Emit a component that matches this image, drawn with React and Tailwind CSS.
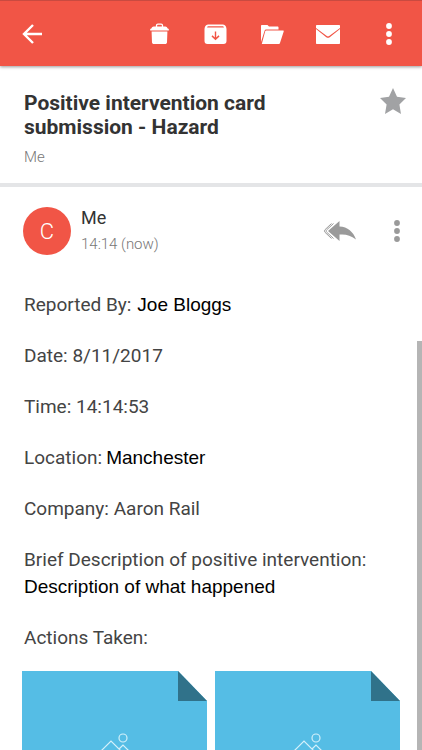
const Toolbar = () => {
  return (
    <header className="flex h-[66px] shrink-0 items-center justify-between border-t border-[#c94a40] bg-[#f15546] pr-[21px] pl-5 text-white shadow-[0_1px_3px_rgba(0,0,0,0.4)]">
      <button type="button" aria-label="Back" className="flex size-6 items-center justify-center">
        <svg viewBox="0 0 24 24" className="size-6" fill="none" stroke="currentColor" strokeWidth="2.4">
          <path d="M22 12H4.5M13 3L4 12l9 9" />
        </svg>
      </button>

      <div className="flex items-center gap-8">
        <button type="button" aria-label="Delete">
          <svg viewBox="0 0 24 24" className="size-6" fill="currentColor">
            <path d="M8.500 5V3.600c0-.8.6-1.400 1.400-1.400h3.200c.8 0 1.400.6 1.400 1.400V5" fill="none" stroke="currentColor" strokeWidth="1.300" />
            <path d="M5.700 4.500h11.600c1 0 1.900.8 2.100 1.800L20.800 7v1.500H2.200V7l1.400-.7c.2-1 1.100-1.800 2.100-1.800zM3.600 9.500h15.800l-.4 11c-.1.900-.8 1.500-1.700 1.500H5.700c-.9 0-1.600-.6-1.700-1.500z" />
          </svg>
        </button>
        <button type="button" aria-label="Archive">
          <svg viewBox="0 0 24 24" className="size-6" fill="currentColor">
            <path fillRule="evenodd" d="M4 2.500h15a3 3 0 0 1 2.600 1.600c.5.900.9 2 .9 3V19a3 3 0 0 1-3 3h-16a3 3 0 0 1-3-3V7c0-1 .4-2.100.9-2.900A3 3 0 0 1 4 2.500zM3 5.500h17l-.8-1.300H3.800zM10.800 9.500v6l-2.300-2.200-1 1.100 4 3.800 4-3.800-1-1.100-2.300 2.200v-6z" />
          </svg>
        </button>
        <button type="button" aria-label="Move to folder">
          <svg viewBox="0 0 24 24" className="size-6" fill="currentColor">
            <path d="M1 20V4c0-.6.4-1 1-1h5.500l1.500 1.500h8.500c.6 0 1 .4 1 1v2H6.500c-1 0-1.700.5-2 1.400z" />
            <path d="M6.200 8.500H23c.6 0 .9.500.7 1l-3.800 11.800c-.1.400-.5.700-1 .7H1.800L5.200 9.300c.1-.5.500-.8 1-.8z" />
          </svg>
        </button>
        <button type="button" aria-label="Mark as unread">
          <svg viewBox="0 0 24 24" className="size-6" fill="currentColor">
            <path d="M1 3h22c.6 0 1 .4 1 1v2L13.200 14c-.7.600-1.700.600-2.400 0L0 6V4c0-.6.4-1 1-1z" />
            <path d="M0 7l10.300 8.200c1 .8 2.400.8 3.400 0L24 7v14c0 .6-.4 1-1 1H1c-.6 0-1-.4-1-1z" />
          </svg>
        </button>
        <button type="button" aria-label="More options" className="ml-[5px]">
          <svg viewBox="0 0 24 24" className="size-6" fill="currentColor">
            <circle cx="12" cy="4" r="2.900" />
            <circle cx="12" cy="12" r="2.900" />
            <circle cx="12" cy="20" r="2.900" />
          </svg>
        </button>
      </div>
    </header>
  );
};

const Subject = () => {
  return (
    <section className="flex items-start justify-between border-b-4 border-[#e4e5e7] pt-[22px] pr-4 pb-4 pl-6">
      <div className="pt-[3px]">
        <h1 className="max-w-[280px] text-[21px] leading-6 font-bold text-[#333333]">
          Positive intervention card submission - Hazard
        </h1>
        <p className="mt-2 text-[15px] leading-5 font-light text-[#777777]">Me</p>
      </div>
      <button type="button" aria-label="Star" className="text-[#a1a2a4]">
        <svg viewBox="0 0 26 26" className="size-[26px]" fill="currentColor">
          <path d="M13 0l4 8.800 9 1.100-6.600 6.500L21 26l-8-4.700L5 26l1.600-9.600L0 9.900l9-1.100z" />
        </svg>
      </button>
    </section>
  );
};

const Sender = () => {
  return (
    <div className="flex items-center pt-[18px] pr-[13px] pl-[23px]">
      <div className="flex size-12 items-center justify-center rounded-full bg-[#f15546] text-[22px] font-light text-white">
        C
      </div>
      <div className="ml-[10px] flex-1">
        <p className="text-[18px] leading-[26px] text-[#333333]">Me</p>
        <p className="text-[15px] leading-[26px] font-light text-[#777777]">14:14 (now)</p>
      </div>
      <button type="button" aria-label="Reply all" className="text-[#9a9a9a]">
        <svg viewBox="0 0 34 24" className="h-6 w-[34px]" fill="currentColor">
          <path d="M5 12L16.500 2v5.500c8 .3 14 5.500 16.500 13-5.500-4.300-10-5.500-16.500-5V22z" />
          <path d="M10.500 4.500L3.500 11c-.6.600-.6 1.400 0 2l7 6.500M8.500 4.500L2 10.700c-.8.700-.8 1.900 0 2.600l6.500 6.200" fill="none" stroke="currentColor" />
        </svg>
      </button>
      <button type="button" aria-label="Message options" className="ml-7 text-[#9a9a9a]">
        <svg viewBox="0 0 24 24" className="size-6" fill="currentColor">
          <circle cx="12" cy="4" r="2.900" />
          <circle cx="12" cy="12" r="2.900" />
          <circle cx="12" cy="20" r="2.900" />
        </svg>
      </button>
    </div>
  );
};

const Value = ({ children }) => {
  return (
    <span className="font-['Liberation_Sans',Arial,sans-serif] text-[19px] text-black">
      {children}
    </span>
  );
};

const Attachment = ({ name }) => {
  return (
    <a href="#attachment" aria-label={name} className="flex-1">
      <svg viewBox="0 0 185 240" className="w-full" fill="none">
        <path d="M0 0h156l29 30v210H0z" fill="#55bde5" />
        <path d="M156 0l29 30h-29z" fill="#30728a" />
        <g stroke="#d3f0fa" strokeWidth="1.200">
          <circle cx="101" cy="67" r="4" />
          <path d="M74 85l15-15 15 15M97 78l4-4 11 11" />
        </g>
      </svg>
    </a>
  );
};

const App = () => {
  return (
    <div className="relative flex h-screen flex-col overflow-hidden bg-white font-[Roboto,sans-serif]">
      <Toolbar />
      <main className="flex-1">
        <Subject />
        <Sender />

        {/* report details */}
        <div className="mt-[35px] flex flex-col gap-[25px] pl-6 text-[19px] leading-[26px] text-[#444444]">
          <p className="flex items-baseline gap-[6px]">
            Reported By: <Value>Joe Bloggs</Value>
          </p>
          <p>Date: 8/11/2017</p>
          <p>Time: 14:14:53</p>
          <p className="flex items-baseline gap-1">
            Location: <Value>Manchester</Value>
          </p>
          <p>Company: Aaron Rail</p>
          <div>
            <p>Brief Description of positive intervention:</p>
            <p className="mt-px">
              <Value>Description of what happened</Value>
            </p>
          </div>
          <p>Actions Taken:</p>
        </div>

        {/* attachments */}
        <div className="mt-5 flex gap-2 pr-[22px] pl-[22px]">
          <Attachment name="First attachment" />
          <Attachment name="Second attachment" />
        </div>
      </main>

      {/* scroll thumb */}
      <div className="absolute right-0 bottom-0 h-[409px] w-[5px] bg-[#b5b5b5]" />
    </div>
  );
};

export default App;
